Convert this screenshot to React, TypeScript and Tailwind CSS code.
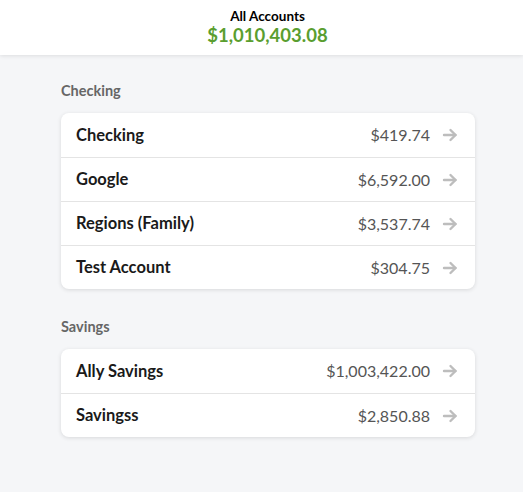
import React from "react";

const Arrow = () => (
  <svg width="16" height="16" viewBox="0 0 16 16" fill="none" stroke="#bdbdbd" strokeWidth="2.4" strokeLinecap="round" strokeLinejoin="round">
    <path d="M2 8h11.5" />
    <path d="M8.5 3 13.5 8l-5 5" />
  </svg>
);

type Acct = { name: string; amount: string };

const Section = ({ title, items }: { title: string; items: Acct[] }) => (
  <div className="flex flex-col">
    <div className="h-[22px] text-[14.5px] font-bold text-[#666666] leading-[22px]">{title}</div>
    <div className="mt-[11px] w-[414px] rounded-[8px] bg-white shadow-[0_1px_4px_rgba(0,0,0,0.12)]">
      {items.map((a, i) => (
        <div
          key={a.name}
          className={`flex h-[44px] items-center pl-[15px] pr-[17px] ${i > 0 ? "border-t border-[#e4e4e4]" : ""}`}
        >
          <div className="flex-1 text-[16.5px] font-bold text-[#1a1a1a]">{a.name}</div>
          <div className="text-[16px] text-[#555555]">{a.amount}</div>
          <div className="ml-[12px] flex items-center">
            <Arrow />
          </div>
        </div>
      ))}
    </div>
  </div>
);

export default function App() {
  return (
    <div className="min-h-[492px] bg-[#f5f6f8]" style={{ fontFamily: 'Lato, sans-serif' }}>
      <div className="flex h-[55px] flex-col items-center justify-center bg-white pl-[12px] shadow-[0_1px_4px_rgba(0,0,0,0.1)]">
        <div className="text-[13.5px] font-bold leading-[16px] text-black">All Accounts</div>
        <div className="text-[18.5px] font-bold leading-[23px] text-[#5a9e2f]">$1,010,403.08</div>
      </div>
      <div className="flex flex-col gap-[27px] pl-[61px] pt-[25px]">
        <Section
          title="Checking"
          items={[
            { name: "Checking", amount: "$419.74" },
            { name: "Google", amount: "$6,592.00" },
            { name: "Regions (Family)", amount: "$3,537.74" },
            { name: "Test Account", amount: "$304.75" },
          ]}
        />
        <Section
          title="Savings"
          items={[
            { name: "Ally Savings", amount: "$1,003,422.00" },
            { name: "Savingss", amount: "$2,850.88" },
          ]}
        />
      </div>
    </div>
  );
}
